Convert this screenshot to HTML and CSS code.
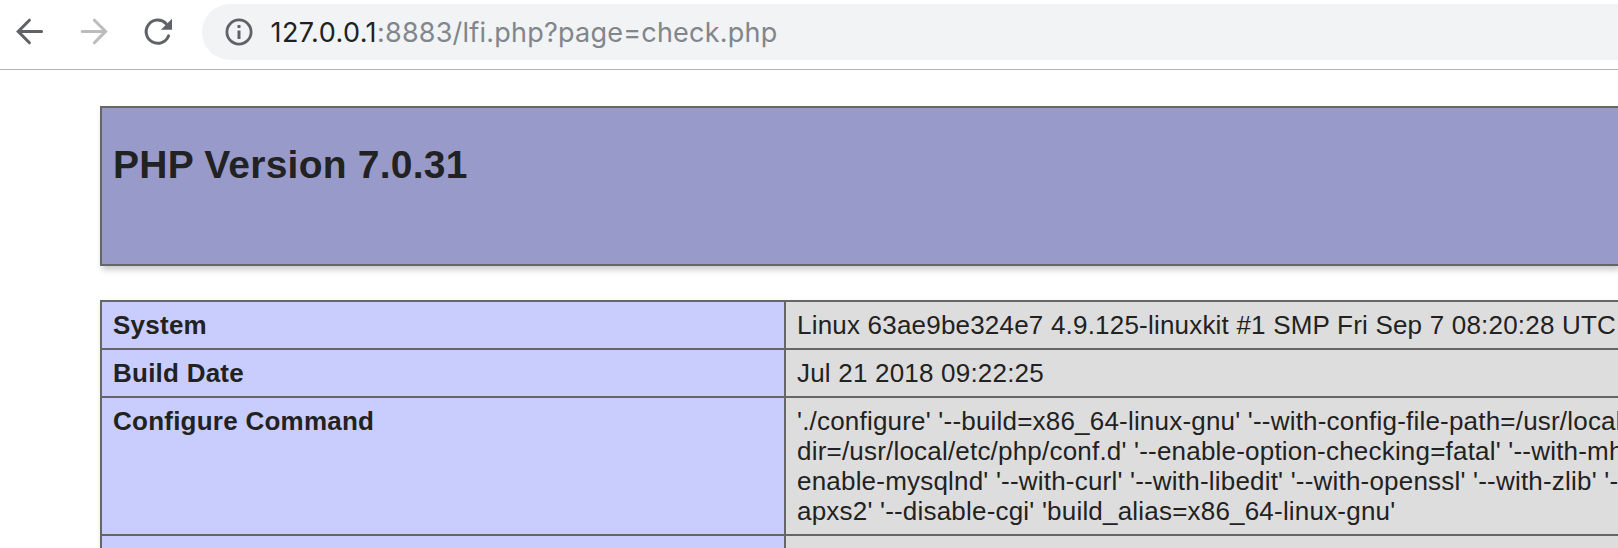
FILE: index.html
```html
<!DOCTYPE html>
<html lang="en">
<head>
<meta charset="utf-8">
<title>phpinfo()</title>
<link rel="stylesheet" href="styles.css">
</head>
<body>
<header class="toolbar">
  <svg class="icon" viewBox="0 0 32 32"><path d="M15.4 4.2 4.2 15.4l11.2 11.4M4.6 15.4h23"/></svg>
  <svg class="icon icon-disabled" viewBox="0 0 32 32"><path d="M16.4 4.2 27.6 15.4 16.4 26.8M27.2 15.4H4.2"/></svg>
  <svg class="icon" viewBox="0 0 32 32"><path d="M26.6 19.8A11.6 11.6 0 1 1 24.1 7.6"/><path class="solid" d="M30 2.8v11H18.9z"/></svg>
  <div class="address">
    <svg class="info" viewBox="0 0 28 28"><circle cx="14" cy="14" r="12.1"/><path d="M12.5 7h3v3h-3zM12.5 12.6h3v8.4h-3z"/></svg>
    <div class="url"><span class="host">127.0.0.1</span><span class="path">:8883/lfi.php?page=check.php</span></div>
  </div>
</header>
<main class="page">
  <section class="banner"><h1>PHP Version 7.0.31</h1></section>
  <table class="info-table">
    <tr><th>System</th><td>Linux 63ae9be324e7 4.9.125-linuxkit #1 SMP Fri Sep 7 08:20:28 UTC</td></tr>
    <tr><th>Build Date</th><td>Jul 21 2018 09:22:25</td></tr>
    <tr><th>Configure Command</th><td>'./configure' '--build=x86_64-linux-gnu' '--with-config-file-path=/usr/local<br>dir=/usr/local/etc/php/conf.d' '--enable-option-checking=fatal' '--with-mh<br>enable-mysqlnd' '--with-curl' '--with-libedit' '--with-openssl' '--with-zlib' '--<br>apxs2' '--disable-cgi' 'build_alias=x86_64-linux-gnu'</td></tr>
    <tr class="partial"><th></th><td></td></tr>
  </table>
</main>
</body>
</html>
```
FILE: styles.css
```css
html, body {
  margin: 0;
  height: 548px;
  overflow: hidden;
  background: #fff;
  color: #222;
  font-family: "Liberation Sans", Arial, sans-serif;
}

.toolbar {
  box-sizing: border-box;
  height: 70px;
  padding: 4px 0 9px 14px;
  border-bottom: 1px solid #b2b3b4;
  display: flex;
  align-items: center;
}

.icon {
  width: 32px;
  height: 32px;
  flex: none;
  margin-right: 32px;
  fill: none;
  stroke: #5f6368;
  stroke-width: 3;
  stroke-linecap: round;
}

.icon-disabled { stroke: #babcbe; }
.icon .solid { fill: #5f6368; stroke: none; }

.address {
  box-sizing: border-box;
  flex: 1;
  height: 56px;
  margin-left: -4px;
  padding-left: 22.5px;
  border-radius: 28px 0 0 28px;
  background: #f1f3f4;
  display: flex;
  align-items: center;
}

.info {
  width: 28px;
  height: 28px;
  flex: none;
  fill: #5f6368;
}

.info circle {
  fill: none;
  stroke: #5f6368;
  stroke-width: 2.8;
}

.url {
  margin-left: 18px;
  padding-top: 1px;
  font: 27px/56px Inter, sans-serif;
  white-space: nowrap;
}

.host { color: #202124; letter-spacing: 0.42px; }
.path { color: #80868b; letter-spacing: 0.22px; }

.page {
  box-sizing: border-box;
  height: 478px;
  padding: 36px 0 0 100px;
  overflow: hidden;
}

.banner, .info-table {
  box-sizing: border-box;
  width: 100%;
  box-shadow: 2px 4px 6px #ccc;
}

.banner {
  height: 160px;
  border: 2px solid #666;
  border-right: 0;
  padding: 35px 11px;
  background: #989bca;
}

h1 {
  margin: 0;
  font-size: 39px;
  line-height: 44px;
  letter-spacing: 0.23px;
}

.info-table {
  margin-top: 34px;
  border-collapse: separate;
  border-spacing: 0;
  table-layout: fixed;
  border-top: 2px solid #666;
  border-left: 2px solid #666;
  font-size: 26px;
  line-height: 30px;
  letter-spacing: 0.2px;
}

.info-table th, .info-table td {
  border-bottom: 2px solid #666;
  padding: 8px 0 8px 11px;
  vertical-align: top;
  text-align: left;
  white-space: nowrap;
}

.info-table th {
  width: 671px;
  border-right: 2px solid #666;
  background: #c9cdfe;
  letter-spacing: 0.24px;
}

.info-table td {
  background: #ddd;
  overflow: hidden;
}

.info-table .partial th, .info-table .partial td {
  height: 12px;
  padding: 0;
  border-bottom: 0;
}
```
